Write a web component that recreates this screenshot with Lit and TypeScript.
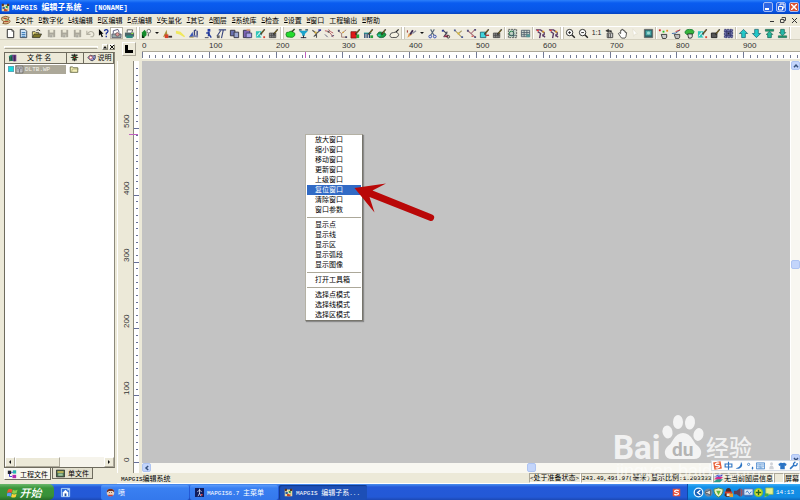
import { LitElement, html, svg, css, TemplateResult, SVGTemplateResult } from "lit";
import { customElement } from "lit/decorators.js";
import { classMap } from "lit/directives/class-map.js";

/* ---------- shared text helpers ---------- */

const fonts = css`
  :host {
    font: 7px/10px "Liberation Mono", "Noto Sans CJK SC", monospace;
    color: #000;
  }
  * {
    box-sizing: border-box;
  }
  .lat {
    font-size: 6px;
  }
  .cjk {
    font-family: "Noto Sans CJK SC", sans-serif;
  }
  button {
    font: inherit;
    color: inherit;
    border: 0;
    padding: 0;
    margin: 0;
    background: none;
    display: flex;
    align-items: center;
    justify-content: center;
    white-space: pre;
  }
  svg {
    display: block;
    flex: none;
  }
`;

/* Latin runs are set one size smaller so that two of them fill one ideograph. */
const mixed = (text: string): TemplateResult[] =>
  (text.match(/[\x20-\x7e]+|[^\x20-\x7e]+/g) ?? []).map((run) =>
    run.charCodeAt(0) < 127
      ? html`<span class="lat">${run}</span>`
      : html`<span class="cjk">${run}</span>`
  );

/* ---------- icons, all on a 12 x 12 grid ---------- */

const pencil = svg`<path d="M6 7 L10.5 1.5" stroke="#222" stroke-width="1.6"/><path d="M7 6 L10 2.3" stroke="#d8b030" stroke-width=".7"/>`;
const floppy = svg`<path d="M2 2h8v8H2z" fill="#aaa79b"/><path d="M4 2h4v3H4z" fill="#ece9d8"/><path d="M4 7h4v3H4z" fill="#c9c6b8"/><path d="M5 8h1v2H5z" fill="#888"/>`;
const grid = svg`<path d="M1.5 5.5h7v5h-7zM1.5 8h7M4 5.5v5M6.5 5.5v5" stroke="#444" fill="#888" stroke-width=".8"/>`;

const icons: Record<string, SVGTemplateResult> = {
  blank: svg`<path d="M2.5 1.5h5l2 2v7h-7z" fill="#fff" stroke="#222"/><path d="M7.5 1.5v2h2" stroke="#222" fill="none" stroke-width=".7"/>`,
  doc: svg`<path d="M2.5 1.5h5l2 2v7h-7z" fill="#cfe4f6" stroke="#345"/><path d="M4 5h4M4 7h4M4 9h4" stroke="#2a6fb0"/>`,
  open: svg`<path d="M1.5 10V4h3l1 1h3v2" fill="#e9dc7a" stroke="#333" stroke-width=".8"/><path d="M1.5 10.5l2-4h8l-2 4z" fill="#7a7428" stroke="#222" stroke-width=".7"/><path d="M6 2.5q2-1.5 4 .6" stroke="#222" fill="none"/>`,
  floppy,
  undo: svg`<path d="M2 3v4h4M2.5 6.5Q6 2 9 5q1.6 2.4-.5 4.5H6" stroke="#b5b2a4" stroke-width="1.2" fill="none"/>`,
  help: svg`<path d="M1 1l5 5.2H4l1.4 3.4-1.3.5L2.8 6.8 1 8.4z" fill="#000"/><path d="M7 3.5Q7.3 1.6 9 1.7q2 .2 1.8 2Q10.6 5 9 5.700v1.500M9 8.500v1.500" stroke="#122a9a" stroke-width="1.4" fill="none"/>`,
  preview: svg`<path d="M2.500 6V3l5-1.500L9 5" fill="#fff" stroke="#557"/><path d="M1 6.500h10v4H1z" fill="#9aa" stroke="#445" stroke-width=".8"/><circle cx="7" cy="7" r="2" fill="#d99" stroke="#544" stroke-width=".7"/>`,
  print: svg`<path d="M3.500 5V2h6L8.500 5" fill="#fff" stroke="#333" stroke-width=".8"/><path d="M1 5h10v4.500H1z" fill="#4c6468"/><path d="M2.500 8h7v3h-7z" fill="#2d8a80"/><path d="M8 6h2" stroke="#9f3"/>`,
  tree: svg`<path d="M1 10V5l3-3 2 3v3L3 10.500z" fill="#128a2a"/><path d="M1 7l3 4H1z" fill="#0c2c14"/><circle cx="8.500" cy="3.500" r="2" fill="#fff" stroke="#444" stroke-width=".8"/><path d="M8 6v3" stroke="#444"/>`,
  redHill: svg`<path d="M1 10l4-8 1 6z" fill="#a8923c"/><path d="M3 7h4v4H3z" fill="#d8402a"/><path d="M7 8.500h4v2H7z" fill="#3c3030"/>`,
  yellow: svg`<path d="M1 3l5 1 5 5-1 1-5-3-4-1z" fill="#f0e85c"/>`,
  bars: svg`<path d="M1 10l4-6 1 6z" fill="#3a58b8"/><path d="M7 9V3l2-1M10 10V3" stroke="#3a4480" stroke-width="1.500"/><path d="M5 8h6v2H5z" fill="#8088b0"/><path d="M2 10h4" stroke="#c8a84a"/>`,
  person: svg`<path d="M5 1h3v3H5z" fill="#2438a8"/><path d="M6 4v5M6 6l3 4.500M3.500 5.500h4" stroke="#223a9a" stroke-width="1.500" fill="none"/><path d="M2 10.500h4" stroke="#445"/>`,
  tline: svg`<path d="M3 2h8M8 2L6 11M1 9l4-6" stroke="#38457e" stroke-width="1.200" fill="none"/><path d="M1 8h3v3H1z" fill="#666"/>`,
  copy: svg`<path d="M1.500 2.500h5v6h-5z" fill="#6a72b0" stroke="#334"/><path d="M5.500 4.500h5v6h-5z" fill="#9aa6d0" stroke="#334"/>`,
  paste: svg`<path d="M1.500 2.500h7v8h-7z" fill="#7b62b4" stroke="#334"/><path d="M5 1h4v2H5z" fill="#e0a080"/><path d="M4.500 5.500h6v5h-6z" fill="#aaa4e8" stroke="#446"/>`,
  tealPen: svg`<path d="M1 3.500h6v7H1z" fill="#2fc4b8"/><path d="M2 9l3-4 2 5" stroke="#fff" fill="none"/>${pencil}<path d="M9 9h2v2H9z" fill="#d43"/>`,
  gridPen: svg`${grid}${pencil}`,
  blob: svg`<path d="M1 7q0-3 3-2.500Q7 2 9 4.500q3 1 1.500 4Q9 11 5 10 1 10.500 1 7z" fill="#24dc2c" stroke="#1c6c20" stroke-width=".8"/><path d="M7.500 4l3-3" stroke="#342" stroke-width="1.500"/>`,
  funnel: svg`<path d="M1 3h10L7.500 6.500v2h-3v-2z" fill="#1ca4cc"/><path d="M3 10.500h6M6 8v3" stroke="#223"/><path d="M1 2h3M8 2h3" stroke="#245" stroke-width="1.400"/>`,
  vcross: svg`<path d="M1.500 2.500L6 6l4.500-4M6 6v4.500M3 9.500l3-3" stroke="#555" stroke-width="1.200" fill="none"/><path d="M4 4h2v2H4z" fill="#dcae30"/><path d="M8 1.500h3v1.500H8z" fill="#22a"/>`,
  arcs: svg`<path d="M1 3q5 0 9 7M5 1.500q2 3 5 4" stroke="#b4505c" fill="none"/><path d="M1 7l3 3M8 9l3-1" stroke="#557"/><path d="M4 3h2v2H4z" fill="#555"/>`,
  branch: svg`<path d="M1 3l4 3 5-4M5 6v4h5" stroke="#a07a70" fill="none"/><path d="M1 2h2v2H1zM9 9h2v2H9z" fill="#446"/><path d="M6 4h1.500v1.500H6z" fill="#da3"/>`,
  redBox: svg`<path d="M1 4h6v7H1z" fill="#e01818" stroke="#611" stroke-width=".7"/><path d="M7 7h3v4H7z" fill="#22a838"/>${pencil}`,
  cols: svg`<path d="M1 5h8v1.500H1z" fill="#289a94"/><path d="M2 6v5M4.500 6v5M7 6v5" stroke="#24406c" stroke-width="1.400"/><path d="M8 8h3v3H8z" fill="#2a9c40"/>${pencil}`,
  greenPen: svg`<path d="M1 7q2-4 5-2.500 4-.5 5 3Q9 11 6 10.500 2 11 1 7z" fill="#1a9c3c" stroke="#154" stroke-width=".7"/><path d="M2 7h3v2H2z" fill="#2bc4b8"/>${pencil}`,
  outline: svg`<path d="M1 8q1-3.500 4-3 4-1.500 5.500 2Q10 11 5.500 10.300 1 11 1 8z" fill="#f6f3e4" stroke="#444"/><path d="M7.500 4.500l3-3" stroke="#222" stroke-width="1.300"/>`,
  pen: svg`<path d="M1.500 10.500L3 6l4 1z" fill="#e49a50"/><path d="M1.500 5V2.500" stroke="#922"/><path d="M4.500 7l3-4.500" stroke="#402c50" stroke-width="2"/><path d="M7 6l4-3" stroke="#889" stroke-width="1.200"/>`,
  cut: svg`<path d="M4 1.500L7.500 8M8 1.500L4 8" stroke="#567" stroke-width="1.200"/><circle cx="3.500" cy="9.300" r="1.500" fill="none" stroke="#2a44b0"/><circle cx="8.500" cy="9.300" r="1.500" fill="none" stroke="#2a44b0"/>`,
  cutRed: svg`<path d="M3 2l5 5M8 4L4 10" stroke="#445" stroke-width="1.200"/><path d="M5 8h4v2H5z" fill="#a42a50"/><path d="M2 2h2v2H2z" fill="#2a3a9a"/><circle cx="9" cy="9.500" r="1.500" fill="none" stroke="#333"/>`,
  diag: svg`<path d="M1.500 2l8 8M9.500 3L6 6" stroke="#a89a68" stroke-width="1.100"/><path d="M1 1.500h2v2H1zM9 9h2v2H9z" fill="#4a5c98"/><path d="M5 5h2v2H5z" fill="#e2bc30"/>`,
  diag2: svg`<path d="M2 3l8 7M10 1.500L5.500 6" stroke="#a8707c" stroke-width="1.100"/><path d="M1 2h2v2H1zM9 9h2v2H9zM9 1h2v2H9z" fill="#54507a"/><path d="M6 9h2" stroke="#c22"/>`,
  cyanPen: svg`<path d="M1.500 4.500h6v6h-6z" fill="#42d4dc" stroke="#156" stroke-width=".8"/><path d="M7 8h4" stroke="#b33" stroke-width="1.500"/>${pencil}`,
  mosaic: svg`<path d="M1.500 1.500h9v9h-9z" fill="#c4d4c8" stroke="#555" stroke-dasharray="2 1"/><circle cx="5" cy="6" r="2.500" fill="none" stroke="#274"/><path d="M7 2v8M2 8h8" stroke="#456" stroke-width=".8"/>`,
  table: svg`<path d="M1.500 2.500h9v7h-9zM1.500 5h9M1.500 7.300h9M4.500 2.500v7M7.500 2.500v7" fill="#cdd8d0" stroke="#4d5a68" stroke-width=".9"/><path d="M7 7h4v3H7z" fill="#599"/>`,
  figures: svg`<path d="M1 2h5l4 3v2L8 9M3 4l3 2-1 5M8 7l3 3" stroke="#5a3a64" stroke-width="1.500" fill="none"/><path d="M2 2h2v1.500H2z" fill="#e33"/><path d="M8 3h2v2H8z" fill="#e6a52c"/>`,
  zoomIn: svg`<circle cx="5" cy="5" r="3.500" fill="#fff" stroke="#222"/><path d="M3.500 5h3M5 3.500v3" stroke="#222"/><path d="M7.700 7.700l3 3" stroke="#222" stroke-width="1.600"/>`,
  zoomOut: svg`<circle cx="5" cy="5" r="3.500" fill="#fff" stroke="#222"/><path d="M3.500 5h3" stroke="#222"/><path d="M7.700 7.700l3 3" stroke="#222" stroke-width="1.600"/>`,
  refresh: svg`<path d="M2 3l3-1.500v3zM4 3h4v2" stroke="#333" fill="#333" stroke-width=".8"/><path d="M3.500 5.500h6v5h-6z" fill="#ccc" stroke="#444"/><path d="M5 6v5M7 6v5" stroke="#555"/>`,
  hand: svg`<path d="M3.500 9L1.500 6l1-.8L4 6V2.500h1.200V1.500h1.300v1h1.300v1H9V5l1.500 0-.8 4.500-1 1.500H5z" fill="#fff" stroke="#222" stroke-width=".8"/>`,
  ghost: svg`<path d="M3 1l5 5.500H5.500L4 9z" fill="#fff" stroke="#dcd8c6" stroke-width=".5"/>`,
  picture: svg`<path d="M1.500 1.500h9v9h-9z" fill="#2c6468" stroke="#666"/><path d="M3 3h6v5H3z" fill="#49a8a8"/><circle cx="6" cy="5.500" r="1.700" fill="#9cd8d0"/>`,
  pickDots: svg`<path d="M1 1.500h2v2H1z" fill="#d22"/><path d="M5 3h2v2H5z" fill="#2b2"/><path d="M9 2h2v2H9z" fill="#e2902a"/><path d="M3.500 7h6v3l-1 1.500H5z" fill="#ccc" stroke="#222" stroke-width=".9"/>`,
  pickLine: svg`<path d="M1 6q4 1 9-4" stroke="#36a" fill="none"/><path d="M5 4l5-2" stroke="#c33"/><path d="M3.500 7h6v3l-1 1.500H5z" fill="#bbb" stroke="#333" stroke-width=".9"/>`,
  pickArea: svg`<path d="M1 4q2-3 5-2.500Q10 1 11 4q0 3-4 3-6 1-6-3z" fill="#38b43c" stroke="#173" stroke-width=".8"/><path d="M4 6.500h5v3L8 11H5z" fill="#ddd" stroke="#222" stroke-width=".9"/>`,
  darkPen: svg`<path d="M1.500 5.500h6v5h-6z" fill="#555" stroke="#222"/>${pencil}`,
  navy: svg`<path d="M1.500 1.500h9v9h-9z" fill="#6a6ea4" stroke="#3c3f76" stroke-dasharray="2 1"/><path d="M2 4h8M2 8h8M4 2v8M8 2v8" stroke="#34376e" stroke-width=".9"/><path d="M5 5h2v2H5z" fill="#223"/>`,
  up: svg`<path d="M6 1.500L10.500 6H8v4.500H4V6H1.500z" fill="#22c8c8" stroke="#176470" stroke-width=".8"/>`,
  down: svg`<path d="M6 10.500L10.500 6H8V1.500H4V6H1.500z" fill="#22c8c8" stroke="#176470" stroke-width=".8"/>`,
  top: svg`<path d="M1.500 1.500h9v2h-9z" fill="#1f9c70" stroke="#154" stroke-width=".6"/><path d="M6 3.500L9.500 7H8v3.500H4V7H2.500z" fill="#24b89c" stroke="#165" stroke-width=".8"/>`,
  bottom: svg`<path d="M1.500 8.500h9v2h-9z" fill="#1f9c70" stroke="#154" stroke-width=".6"/><path d="M4 1.500h4V5h1.500L6 8.500 2.500 5H4z" fill="#24b8a8" stroke="#165" stroke-width=".8"/>`,
  app: svg`<path d="M1 2h10v9H1z" fill="#e8d69a"/><path d="M1 1h3v3H1zM8 1h3v3H8z" fill="#5a3420"/><path d="M2 5h3v3H2z" fill="#2b5c9c"/><path d="M6 4h3v3H6z" fill="#2e9a4c"/><path d="M4 8h5v3H4z" fill="#c04a2a"/><path d="M4 3l5 7" stroke="#fff" stroke-width=".8"/>`,
  mdi: svg`<path d="M1 3q5-3 9 0L8 5q3 1 3 3-3 4-9 2l2-2q-4-1-3-5z" fill="#e6cf96" stroke="#7a4a20"/><path d="M3 4h4M4 8h5" stroke="#b0301c" stroke-width="1.200"/><path d="M5 6h4" stroke="#2a7a3a"/>`,
  files: svg`<path d="M1 4q2-3 5-1.500l1 7H2z" fill="#238a6c"/><path d="M5 2h5v8H6z" fill="#6a3a8a"/><path d="M2 5v5M4 4v5M8 3v7" stroke="#222" stroke-width=".8"/>`,
  bug: svg`<path d="M2 2h8v2H2zM3 8h6v2H3z" fill="#333"/><circle cx="6" cy="6" r="3" fill="#2b6a32"/><path d="M6 1v10M1 6h10" stroke="#111"/><path d="M5 5h2v2H5z" fill="#d33"/>`,
  eye: svg`<path d="M1 6q3-5 7-2l3-1v4q-3 5-6 3z" fill="#9aa0d8" stroke="#334"/><circle cx="5" cy="6" r="2" fill="#fff" stroke="#c44"/><path d="M8 6l2 3" stroke="#225"/>`,
  layer: svg`<path d="M1.500 1.500h9v9h-9z" fill="#e8e8e8" stroke="#555"/><path d="M4 3v6M6 5v5M8 3v6M3 4h6" stroke="#5a5a66"/>`,
  folder: svg`<path d="M1.500 10V3.500h3l1 1h5V10z" fill="#f4efb8" stroke="#5f6238"/><path d="M3 10l1-4h7.500" stroke="#8b8f5c" fill="none" stroke-width=".7"/>`,
  project: svg`<path d="M1 2h4v4H1z" fill="#223"/><path d="M7 1.500h4v4H7z" fill="#24b4b0"/><path d="M6.500 7h4.500v4H6.500z" fill="#b02cb0"/><path d="M5 4h2M3 6v3h3" stroke="#2a2ad0" fill="none"/>`,
  sheet: svg`<path d="M.500 1.500h11v9H.500z" fill="#4b6f4e" stroke="#222"/><path d="M2 3h8v2H2z" fill="#d8c45a"/><path d="M3 6h6v3H3z" fill="#9cc4a0"/>`,
  flag: svg`<path d="M1 3q2.500-2 5 0L5 6.500q-2-1.500-5 0z" fill="#f0562c"/><path d="M6.500 3q2 1.500 5 0l-1 3.500q-3 1.500-5 0z" fill="#8fd04a"/><path d="M0 7q2.500-1.500 5 0l-1 3.500q-2-1.500-5 0z" fill="#5a9cf4"/><path d="M5.500 7.300q2 1.500 5 0l-1 3.500q-3 1.500-5 0z" fill="#fbd23c"/>`,
  desktop: svg`<path d="M1.500 1.500h9v9h-9z" fill="#2c6cd8" stroke="#b4d8fc"/><path d="M3 10V6l3-3 3 3v4z" fill="#fff"/><path d="M5 7h2v3H5z" fill="#1c4ea0"/><path d="M8 3h2" stroke="#fff"/>`,
  face: svg`<circle cx="6" cy="6" r="5" fill="#e9d0bc"/><path d="M1 6q0-5 5-5t5 5l-2-2H4z" fill="#6e2c22"/><path d="M3 9h6v2H3z" fill="#c9403a"/><path d="M4 6h1M7 6h1" stroke="#222"/>`,
  mapgis: svg`<path d="M0 0h12v12H0z" fill="#101c5c"/><path d="M6 1v7M3 5l3-2 3 2M4 11l2-4 2 4" stroke="#dfe8ff" fill="none"/><path d="M8 8h2v2H8z" fill="#e44"/>`,
  sogou: svg`<path d="M1 1h10v10H1z" fill="#e8503a"/><path d="M9 3.500Q6 2 4 3.500T6 6t2 2.500T3 8.500" stroke="#fff" stroke-width="1.500" fill="none"/>`,
  sogouTilt: svg`<g transform="rotate(-10 6 6)"><path d="M1 1h10v10H1z" fill="#e85c34"/><path d="M9 3.500Q6 2 4 3.500T6 6t2 2.500T3 8.500" stroke="#fff" stroke-width="1.700" fill="none"/></g>`,
  ring: svg`<circle cx="6" cy="6" r="4.700" fill="#1560b8" stroke="#e8f6ff" stroke-width="1.400"/><path d="M8 3.500L5 6l3 2.500" stroke="#fff" stroke-width="1.500" fill="none"/>`,
  sound: svg`<circle cx="6" cy="6" r="4.500" fill="#6c88a4"/><path d="M3 5h2l3-2v6L5 7H3z" fill="#e4e4e4" stroke="#333" stroke-width=".7"/>`,
  shield: svg`<path d="M6 1l5 1.500q0 6-5 8.500-5-2.500-5-8.500z" fill="#e9f4c8" stroke="#5a8a3a"/><path d="M3.500 4h5L6 9z" fill="#62b43a"/>`,
  penguin: svg`<path d="M3 5q0-4 3-4t3 4l1.500 4-2 2h-5l-2-2z" fill="#4a2a28"/><path d="M2 5h8v2H2z" fill="#d83a28"/><path d="M4 7h4v3H4z" fill="#f4e4d4"/><path d="M7 7h4v4H7z" fill="#e8a030"/>`,
  speaker: svg`<path d="M1 4h3l4-3v10L4 8H1z" fill="#5a3e58"/><path d="M9 2v8M11 3v6" stroke="#c4403a" stroke-width="1.200"/>`,
  net: svg`<path d="M1 2h10v7H1z" fill="#dceaf8" stroke="#3a6cb4"/><path d="M3 6q2-3 3 0t3-1M2 10.500h8" stroke="#2d6ac0" fill="none"/>`,
  guard: svg`<circle cx="6" cy="6" r="5" fill="#7cc832"/><circle cx="6" cy="6" r="3.500" fill="#f4e23a"/><path d="M6 3v6M3 6h6" stroke="#256a1c" stroke-width="1.600"/>`,
  chat: svg`<path d="M3 1h8v7H7l-5 3 1-3z" fill="#e4f08c" stroke="#93b84a" stroke-width=".8"/><path d="M2 7h4v3H2z" fill="#42a84a"/>`,
  zhong: svg`<path d="M1.500 4h9v4h-9zM6 1v10.500" stroke="#2c74c4" stroke-width="1.500" fill="none"/>`,
  moon: svg`<path d="M8 1q4 6-2 9-3 1-5-.5Q8 9 8 1z" fill="#2c74c4"/>`,
  comma: svg`<circle cx="3.500" cy="4.500" r="1.500" stroke="#2c74c4" fill="none"/><path d="M8 8q2 1 0 3" stroke="#2c74c4" stroke-width="1.800" fill="none"/>`,
  keys: svg`<path d="M.500 2.500h11v8H.500z" fill="#dcebfa" stroke="#2c74c4"/><path d="M2 5h8M2 7h8M3.500 9h5" stroke="#2c74c4" stroke-dasharray="1.200 .6"/>`,
  user: svg`<circle cx="6" cy="3.500" r="2" fill="#cfd2d8"/><path d="M3 11q0-5 3-5t3 5z" fill="#cfd2d8"/>`,
  shirt: svg`<path d="M4 2q2 1.500 4 0l3.500 2-1 2.500L9 6v5H3V6l-1.500.5-1-2.500z" fill="#2c74c4"/>`,
  wrench: svg`<path d="M1.500 10.500L7 5" stroke="#2c74c4" stroke-width="2.200"/><path d="M11 2.500Q11 6 8 6.500 5.500 6 6 3.500L8.500 1" stroke="#2c74c4" stroke-width="1.600" fill="none"/>`,
  stack: svg`<path d="M0 4l5-3h7L8 5z" fill="#2438c8"/><path d="M0 7l4-3h8L8 8z" fill="#d42c8a"/><path d="M0 10l4-3h8l-4 4H0z" fill="#2a9a8c"/>`,
};

const icon = (name: string, size = 12) =>
  html`<svg width=${size} height=${size} viewBox="0 0 12 12" fill="none" aria-hidden="true">${icons[name]}</svg>`;

/* ---------- toolbar ---------- */

/* "." small gap, "|" single divider, "‖" band grip, "v" drop-down dot */
const TOOLS =
  "blank doc open . floppy floppy floppy undo help preview* print ‖ tree v redHill yellow bars . person tline copy paste tealPen gridPen ‖ blob funnel vcross arcs branch redBox cols greenPen outline ‖ pen v cut cutRed diag diag2 cyanPen gridPen | mosaic table | figures figures ‖ zoomIn zoomOut 1:1 refresh hand ghost picture | pickDots pickLine pickArea tealPen darkPen navy | up down top bottom |".split(
    " "
  );

@customElement("tool-bar")
export class ToolBar extends LitElement {
  static styles = [
    fonts,
    css`
      :host {
        display: flex;
        align-items: center;
        height: 14px;
        padding-left: 4px;
        background: #efecdf;
        border-top: 1px solid #fff;
        border-bottom: 1px solid #d5d1c0;
        overflow: hidden;
      }
      button {
        width: 13px;
        height: 12px;
        flex: none;
      }
      .pressed {
        background: #fff;
        border: 1px solid #b8b4a4;
      }
      .drop {
        width: 8px;
      }
      .scale {
        font-family: "Liberation Sans", sans-serif;
        color: #222;
      }
      .gap {
        width: 2px;
        flex: none;
      }
      .line {
        width: 2px;
        height: 12px;
        flex: none;
        border-left: 1px solid #c4c0b0;
        border-right: 1px solid #fff;
      }
      .grip {
        width: 4px;
        height: 12px;
        flex: none;
        border-left: 1px solid #cbc7b8;
        border-right: 1px solid #cbc7b8;
        background: #fff;
      }
    `,
  ];

  render() {
    return TOOLS.map((t) => {
      if (t === ".") return html`<span class="gap"></span>`;
      if (t === "|") return html`<span class="line"></span>`;
      if (t === "‖") return html`<span class="grip"></span>`;
      if (t === "v")
        return html`<button class="drop" aria-label="更多">
          <svg width="4" height="4"><path d="M0 1h4L2 3z" fill="#111" /></svg>
        </button>`;
      if (t === "1:1") return html`<button class="scale">1:1</button>`;
      const name = t.replace("*", "");
      return html`<button class=${classMap({ pressed: t.endsWith("*") })} aria-label=${name}>
        ${icon(name, 11)}
      </button>`;
    });
  }
}

/* ---------- project file panel ---------- */

@customElement("file-panel")
export class FilePanel extends LitElement {
  static styles = [
    fonts,
    css`
      :host {
        display: flex;
        flex-direction: column;
        padding: 2px 2px 4px 4px;
        background: #ece9d8;
      }
      .caption {
        display: flex;
        align-items: center;
        gap: 1px;
        height: 10px;
      }
      .grip {
        flex: 1;
        height: 3px;
        margin-right: 3px;
        border: 1px solid #fff;
        border-bottom-color: #aca899;
      }
      .caption button {
        width: 6px;
        height: 6px;
        border: 1px solid;
        border-color: #fff #8a8778 #8a8778 #fff;
      }
      .frame {
        flex: 1;
        display: flex;
        flex-direction: column;
        border: 1px solid #6e6b5e;
        border-right-color: #8c897b;
        background: #fff;
        overflow: hidden;
      }
      table {
        border-collapse: collapse;
        table-layout: fixed;
        width: 100%;
      }
      th {
        height: 10px;
        padding: 0;
        background: #ece9d8;
        border-right: 1px solid #6e6b5e;
        border-bottom: 1px solid #6e6b5e;
        font-weight: 400;
        overflow: hidden;
      }
      .name {
        width: 61px;
      }
      .state {
        width: 17px;
      }
      td {
        height: 12px;
        padding: 0;
      }
      .cell {
        display: flex;
        align-items: center;
        gap: 2px;
        height: 9px;
        padding-left: 3px;
        line-height: 9px;
        white-space: pre;
      }
      .wide {
        gap: 9px;
      }
      .swatch {
        width: 6px;
        height: 6px;
        margin-right: -1px;
        background: #18dce0;
        border: 1px solid #5ab;
      }
      .picked {
        display: flex;
        align-items: center;
        gap: 1px;
        flex: 1;
        height: 9px;
        background: #aca899;
        color: #f4f2ea;
      }
      .hbar {
        display: flex;
        height: 10px;
        margin-top: auto;
        background: #f6f4ec;
      }
      .hbar button {
        width: 10px;
        background: #ece9d8;
        border: 1px solid;
        border-color: #fff #aca899 #aca899 #fff;
      }
      .thumb {
        width: 45px;
        margin-right: auto;
        background: #ece9d8;
        border: 1px solid;
        border-color: #fff #aca899 #aca899 #fff;
      }
      .tabs {
        display: flex;
        align-items: flex-start;
        gap: 1px;
      }
      .tabs button {
        gap: 3px;
        height: 11px;
        padding: 0 3px;
        background: #e2dfce;
        border: 1px solid #6e6b5e;
        border-top: 0;
      }
      .tabs .on {
        height: 12px;
        padding: 0 2px;
        background: #f8f6ee;
        border-left-color: #fff;
      }
    `,
  ];

  render() {
    return html`
      <div class="caption">
        <span class="grip"></span>
        <button aria-label="收起">
          <svg width="4" height="4" viewBox="0 0 4 4"><path d="M0 3.500h4L2 1z" fill="#111" /></svg>
        </button>
        <button aria-label="关闭">
          <svg width="4" height="4" viewBox="0 0 4 4"><path d="M0 0l4 4M4 0L0 4" stroke="#111" /></svg>
        </button>
      </div>
      <div class="frame">
        <table>
          <thead>
            <tr>
              <th class="name"><div class="cell wide">${icon("files", 10)}<span class="cjk">文 件 名</span></div></th>
              <th class="state"><div class="cell">${icon("bug", 9)}</div></th>
              <th><div class="cell">${icon("eye", 9)}<span class="cjk">说明</span></div></th>
            </tr>
          </thead>
          <tbody>
            <tr>
              <td>
                <div class="cell">
                  <span class="swatch"></span><span class="picked">${icon("layer", 9)}${mixed("DLTB.WP")}</span>
                </div>
              </td>
              <td><div class="cell">${icon("folder", 10)}</div></td>
              <td></td>
            </tr>
          </tbody>
        </table>
        <div class="hbar">
          <button aria-label="向左">
            <svg width="4" height="6" viewBox="0 0 4 6"><path d="M3 1v4L1 3z" fill="#111" /></svg>
          </button>
          <span class="thumb"></span>
          <button aria-label="向右">
            <svg width="4" height="6" viewBox="0 0 4 6"><path d="M1 1v4L3 3z" fill="#111" /></svg>
          </button>
        </div>
      </div>
      <div class="tabs">
        <button class="on">${icon("project", 10)}<span class="cjk">工程文件</span></button>
        <button>${icon("sheet", 9)}<span class="cjk">单文件</span></button>
      </div>
    `;
  }
}

/* ---------- rulers, canvas and scroll bars ---------- */

const PX_PER_100 = 66.8;
const steps = (length: number) =>
  Array.from({ length: Math.max(0, Math.floor((length * 10) / PX_PER_100) + 1) }, (_, i) => ({
    pos: Math.round((i * PX_PER_100) / 10),
    major: i % 10 === 0,
    label: String(i * 10),
  }));

const MENU: string[][] = [
  ["放大窗口", "缩小窗口", "移动窗口", "更新窗口", "上级窗口", "复位窗口", "清除窗口", "窗口参数"],
  ["显示点", "显示线", "显示区", "显示弧段", "显示图像"],
  ["打开工具箱"],
  ["选择点模式", "选择线模式", "选择区模式"],
];
const ACTIVE = "复位窗口";

@customElement("map-view")
export class MapView extends LitElement {
  static styles = [
    fonts,
    css`
      :host {
        display: grid;
        grid-template: 21px 1fr 10px / 25px 1fr 10px;
        background: #ece9d8;
        min-height: 0;
      }
      .corner {
        display: flex;
        align-items: center;
        justify-content: center;
        width: 14px;
        height: 14px;
        margin: 2px 0 0 5px;
        border: 1px solid;
        border-color: #fff #aca899 #aca899 #fff;
      }
      .top {
        display: flex;
        flex-direction: column;
        grid-column: 2 / 4;
        min-width: 0;
        overflow: hidden;
      }
      .top svg {
        width: 100%;
        height: 21px;
        overflow: hidden;
      }
      .left {
        border-left: 1px solid #fff;
        grid-row: 2 / 4;
        grid-column: 1;
        min-height: 0;
        display: flex;
        align-items: flex-end;
        overflow: hidden;
      }
      .num {
        font: 8px "Liberation Sans Narrow", "Liberation Sans", sans-serif;
        fill: #333;
      }
      .canvas {
        position: relative;
        background: #c3c3c3;
        min-height: 0;
      }
      .vbar,
      .hbar {
        display: flex;
        background: #f8f7f1;
      }
      .vbar {
        flex-direction: column;
        border-left: 1px solid #fff;
      }
      .hbar {
        grid-column: 2 / 4;
      }
      .vbar button,
      .hbar button,
      .thumb {
        flex: none;
        width: 9px;
        height: 9px;
        border-radius: 2px;
        background: #c3d5fb;
        border: 1px solid #aec4f2;
      }
      .before-v {
        flex: 188;
      }
      .after-v {
        flex: 184;
      }
      .before-h {
        flex: 376;
      }
      .after-h {
        flex: 264;
      }
      .menu {
        position: absolute;
        left: 163px;
        top: 73px;
        width: 58px;
        padding: 0 1px;
        background: #fff;
        border: 1px solid #b4b1a4;
        border-right-color: #77756c;
        border-bottom-color: #77756c;
        box-shadow: 1px 1px 1px #8a8a8a;
      }
      .menu button {
        width: 100%;
        height: 10px;
        padding: 0 0 1px 8px;
        line-height: 9px;
        justify-content: flex-start;
      }
      .menu .active {
        background: #316ac5;
        color: #fff;
      }
      hr {
        margin: 2px 0;
        border: 0;
        border-top: 1px solid #aca899;
      }
      .arrow {
        position: absolute;
        left: 212px;
        top: 120px;
      }
      .mark {
        position: absolute;
        right: 30px;
        bottom: -24px;
        z-index: 1;
      }
      .logo {
        font: 700 33px Roboto, sans-serif;
      }
      .du {
        font: 700 19px Roboto, sans-serif;
      }
      .exp {
        font: 500 23px "Noto Sans CJK SC", sans-serif;
      }
      .site {
        font: 18px "Liberation Sans", sans-serif;
      }
    `,
  ];

  private onResize = () => this.requestUpdate();

  connectedCallback() {
    super.connectedCallback();
    window.addEventListener("resize", this.onResize);
  }

  disconnectedCallback() {
    window.removeEventListener("resize", this.onResize);
    super.disconnectedCallback();
  }

  private chevron(d: string) {
    return html`<svg width="6" height="6" viewBox="0 0 6 6" fill="none">
      <path d=${d} stroke="#35507c" stroke-width="1.500" />
    </svg>`;
  }

  render() {
    const across = steps(window.innerWidth - 142);
    const upward = steps(window.innerHeight - 100);
    return html`
      <div class="corner">
        <svg width="8" height="8" viewBox="0 0 8 8"><path d="M0 0h3v5h5v3H0z" fill="#000" /></svg>
      </div>
      <div class="top">
        <svg shape-rendering="crispEdges">
          <rect x="0" y="11" width="100%" height="8" fill="#fff" />
          <rect x="0" y="11" width="100%" height="1" fill="#aca899" />
          ${across.map(
            (s) => svg`<rect x=${s.pos} y=${s.major ? 12 : 15} width="1" height=${s.major ? 6 : 3} fill="#747b94" />
              ${s.major ? svg`<text class="num" x=${s.pos} y="8">${s.label}</text>` : null}`
          )}
          <rect x="163" y="12" width="1" height="6" fill="#c060c0" />
        </svg>
      </div>
      <div class="left">
        <svg width="24" height="2672" viewBox="0 -2661 24 2672" shape-rendering="crispEdges">
          <rect x="15" y="-2661" width="6" height="2672" fill="#fff" />
          <rect x="15" y="-2661" width="1" height="2672" fill="#8c897b" />
          ${upward.map(
            (s) => svg`<rect x=${s.major ? 16 : 18} y=${-s.pos} width=${s.major ? 5 : 2} height="1" fill="#666f98" />
              ${s.major ? svg`<text class="num" transform="translate(11 ${-s.pos}) rotate(-90)">${s.label}</text>` : null}`
          )}
          <rect x="11" y="-328" width="9" height="1" fill="#c060c0" />
        </svg>
      </div>
      <div class="canvas">
        <div class="menu" role="menu">
          ${MENU.map(
            (group, i) => html`${i ? html`<hr />` : null}
            ${group.map(
              (label) =>
                html`<button role="menuitem" class=${classMap({ cjk: true, active: label === ACTIVE })}>${label}</button>`
            )}`
          )}
        </div>
        <svg class="arrow" width="84" height="42" viewBox="0 0 84 42">
          <path
            d="M0.500 7L32 2.500 18.500 9.500 78 33.500a3.200 3.200 0 0 1-2.300 6.200L15.500 16 20.500 31.500z"
            fill="#b90808"
          />
        </svg>
        <svg class="mark" width="148" height="74" viewBox="0 0 148 74">
          <g fill="#fff" fill-opacity=".8">
            <text class="logo" x="1" y="46">Bai</text>
            <ellipse cx="55.500" cy="19" rx="5" ry="6.500" transform="rotate(-12 55.500 19)" />
            <ellipse cx="66" cy="9" rx="5" ry="7" />
            <ellipse cx="78" cy="9.500" rx="5" ry="7" transform="rotate(8 78 9.500)" />
            <ellipse cx="86.500" cy="21.500" rx="5" ry="6.500" transform="rotate(14 86.500 21.500)" />
            <path
              d="M71 20q6 0 10 7 2 4 5 6 4 4 3 8-1 5-7 5H60q-6 0-7-5-1-4 3-8 3-2 5-6 4-7 10-7z"
            />
            <text class="exp" x="94" y="43">经验</text>
            <text class="site" x="4" y="64" fill-opacity=".5">jingyan.baidu.com</text>
          </g>
          <text class="du" x="60" y="43" fill="#b4b4b4">du</text>
        </svg>
      </div>
      <div class="vbar">
        <button aria-label="向上">${this.chevron("M1 4.200L3 2l2 2.200")}</button>
        <span class="before-v"></span><span class="thumb"></span><span class="after-v"></span>
        <button aria-label="向下">${this.chevron("M1 2l2 2.200L5 2")}</button>
      </div>
      <div class="hbar">
        <button aria-label="向左">${this.chevron("M4.200 1L2 3l2.200 2")}</button>
        <span class="before-h"></span><span class="thumb"></span><span class="after-h"></span>
      </div>
    `;
  }
}

/* ---------- desktop task bar ---------- */

const TASKS = [
  { icon: "face", text: "喷", on: false },
  { icon: "mapgis", text: "MAPGIS6.7 主菜单", on: false },
  { icon: "app", text: "MAPGIS 编辑子系...", on: true },
];
const TRAY = ["ring", "sound", "shield", "penguin", "speaker", "net", "guard", "chat"];

@customElement("task-bar")
export class TaskBar extends LitElement {
  static styles = [
    fonts,
    css`
      :host {
        display: flex;
        height: 16px;
        color: #fff;
        background: linear-gradient(#4a90f0, #2459d8 3px, #2359d6 13px, #1c48b4);
      }
      .start {
        width: 54px;
        gap: 2px;
        padding-right: 6px;
        border-radius: 0 5px 5px 0;
        background: linear-gradient(#6cb86c, #3a963a 4px, #389038 12px, #286c28);
        font: italic 500 11px/14px "Noto Sans CJK SC", sans-serif;
      }
      .quick {
        width: 12px;
        margin: 0 30px 0 5px;
      }
      .task {
        flex: 0 1 88px;
        justify-content: flex-start;
        gap: 3px;
        margin: 1px 1px 0 0;
        padding-left: 5px;
        border-radius: 2px;
        background: linear-gradient(#5c9cfa, #3a80f2 3px, #3478ec);
        overflow: hidden;
      }
      .task.on {
        background: #1d4fb6;
        box-shadow: inset 1px 1px 1px #123a8c;
      }
      .input {
        margin: 0 6px 0 auto;
      }
      .tray {
        display: flex;
        align-items: center;
        width: 113px;
        padding-left: 5px;
        border-left: 1px solid #0c4aa8;
        background: linear-gradient(#3cb0f8, #1290e8 3px, #128ce4 13px, #0c6cc0);
      }
      .tray svg {
        margin-right: -1px;
      }
      .clock {
        margin-left: 3px;
      }
    `,
  ];

  render() {
    return html`
      <button class="start">${icon("flag", 11)}开始</button>
      <button class="quick" aria-label="显示桌面">${icon("desktop", 11)}</button>
      ${TASKS.map(
        (t) => html`<button class=${classMap({ task: true, on: t.on })}>${icon(t.icon, 9)}<span>${mixed(t.text)}</span></button>`
      )}
      <button class="input" aria-label="输入法">${icon("sogou", 9)}</button>
      <div class="tray">${TRAY.map((n) => icon(n, 11))}<time class="clock">${mixed("14:13")}</time></div>
    `;
  }
}

/* ---------- main window ---------- */

const BAR: [string, string][] = [
  ["F", "文件"],
  ["D", "数字化"],
  ["L", "线编辑"],
  ["R", "区编辑"],
  ["P", "点编辑"],
  ["V", "矢量化"],
  ["T", "其它"],
  ["A", "图层"],
  ["S", "系统库"],
  ["C", "检查"],
  ["O", "设置"],
  ["W", "窗口"],
  ["", "工程输出"],
  ["H", "帮助"],
];
const IME = ["sogouTilt", "zhong", "moon", "comma", "keys", "user", "shirt", "wrench"];

@customElement("app-root")
export class AppRoot extends LitElement {
  static styles = [
    fonts,
    css`
      :host {
        position: relative;
        display: flex;
        flex-direction: column;
        height: 100vh;
        overflow: hidden;
        background: #ece9d8;
      }
      .title {
        display: flex;
        align-items: center;
        gap: 2px;
        height: 14px;
        padding: 0 1px;
        color: #fff;
        font-weight: 700;
        white-space: pre;
        background: linear-gradient(#2c80fa, #0a5cf0 3px, #0856e6 11px, #0442c0);
      }
      .title .lat {
        font-size: 7px;
      }
      .title .cjk {
        font-size: 8px;
      }
      .wins {
        display: flex;
        gap: 3px;
        margin-left: auto;
      }
      .wins button {
        width: 10px;
        height: 10px;
        border: 1px solid #a4bcf4;
        border-radius: 2px;
        background: #2e66e4;
      }
      .wins .close {
        background: #dc5030;
      }
      .menus {
        display: flex;
        align-items: center;
        gap: 5px;
        height: 12px;
        padding-left: 1px;
      }
      .menus u {
        font-family: "Liberation Mono", monospace;
      }
      .docs {
        display: flex;
        gap: 5px;
        margin-left: auto;
        padding-right: 3px;
      }
      .docs button {
        width: 6px;
        height: 8px;
      }
      .main {
        flex: 1;
        display: flex;
        min-height: 0;
      }
      file-panel {
        flex: none;
        width: 117px;
      }
      .work {
        flex: 1;
        display: flex;
        flex-direction: column;
        min-width: 0;
      }
      map-view {
        flex: 1;
      }
      .status {
        display: flex;
        height: 11px;
        padding-left: 4px;
        line-height: 11px;
        white-space: pre;
        border-bottom: 1px solid #fff;
      }
      .field {
        display: flex;
        align-items: center;
        gap: 1px;
        flex: none;
        height: 10px;
        border: 1px solid;
        border-color: #aca899 #fff #fff #aca899;
      }
      .mode {
        width: 52px;
        margin-left: auto;
      }
      .coords {
        width: 132px;
        gap: 1px;
      }
      .info {
        width: 61px;
      }
      .blank {
        width: 10px;
      }
      .screen {
        width: 16px;
      }
      .ime {
        position: absolute;
        right: 0;
        bottom: 29px;
        display: flex;
        align-items: center;
        justify-content: space-between;
        width: 89px;
        height: 11px;
        padding: 0 1px;
        background: #fdfdfd;
        border: 1px solid #d4dbe4;
        z-index: 2;
      }
    `,
  ];

  render() {
    return html`
      <header class="title">
        ${icon("app", 9)}<span>${mixed("MAPGIS 编辑子系统 - [NONAME]")}</span>
        <div class="wins">
          <button aria-label="最小化"><svg width="6" height="6"><path d="M0 4h4v2H0z" fill="#fff" /></svg></button>
          <button aria-label="还原">
            <svg width="8" height="8" viewBox="0 0 8 8" fill="none" stroke="#fff">
              <path d="M3 2.500V1h4v4H5.500M1.500 3.500h4v3.500h-4z" />
            </svg>
          </button>
          <button class="close" aria-label="关闭">
            <svg width="6" height="6"><path d="M0 0l6 6M6 0L0 6" stroke="#fff" stroke-width="1.500" /></svg>
          </button>
        </div>
      </header>
      <nav class="menus">
        ${icon("mdi", 10)}
        ${BAR.map(([key, label]) => html`<button class="cjk">${key ? html`<u class="lat">${key}</u>` : null}${label}</button>`)}
        <div class="docs">
          <button aria-label="最小化"><svg width="5" height="6"><path d="M0 4h4v1H0z" fill="#333" /></svg></button>
          <button aria-label="还原">
            <svg width="6" height="6" viewBox="0 0 6 6" fill="none" stroke="#444">
              <path d="M2 1.500V.500h3.500v3H4M.500 2.500H4v3H.500z" />
            </svg>
          </button>
          <button aria-label="关闭"><svg width="5" height="5"><path d="M0 0l5 5M5 0L0 5" stroke="#333" /></svg></button>
        </div>
      </nav>
      <tool-bar></tool-bar>
      <div class="main">
        <file-panel></file-panel>
        <div class="work">
          <map-view></map-view>
          <footer class="status">
            <span>${mixed("MAPGIS编辑系统")}</span>
            <span class="field mode"><span>${mixed("<处于准备状态>")}</span></span>
            <span class="field coords">
              <span>${mixed("243.49,491.97(毫米)")}</span><span>${mixed("显示比例:1.203333")}</span>
            </span>
            <span class="field info">${icon("stack", 9)}<span class="cjk">无当前图层信息</span></span>
            <span class="field blank"></span>
            <span class="field screen"><span class="cjk">屏幕</span></span>
          </footer>
        </div>
      </div>
      <task-bar></task-bar>
      <div class="ime">${IME.map((n) => icon(n, 9))}</div>
    `;
  }
}
